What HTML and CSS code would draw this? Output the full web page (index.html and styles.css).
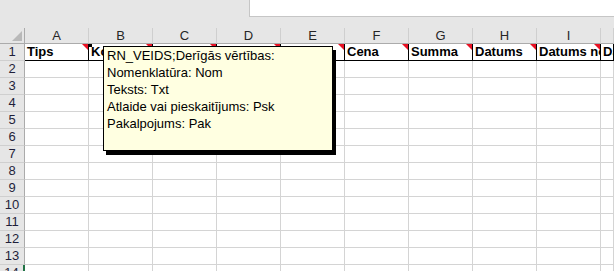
FILE: index.html
```html
<!DOCTYPE html>
<html lang="lv">
<head>
    <meta charset="utf-8"/>
    <title>Izklājlapa ar komentāru</title>
    <link rel="stylesheet" href="styles.css">
</head>
<body>
<div class="top-band">
    <div class="formula-box"></div>
</div>

<div class="sheet">
    <div class="row col-head">
        <div class="corner"><span class="select-all"></span></div>
        <div>A</div><div>B</div><div>C</div><div>D</div><div>E</div>
        <div>F</div><div>G</div><div>H</div><div>I</div><div></div>
    </div>

    <div class="row title-row">
        <div class="num">1</div>
        <div class="cell flag">Tips</div>
        <div class="cell flag">Ko</div>
        <div class="cell flag"></div>
        <div class="cell flag"></div>
        <div class="cell flag"></div>
        <div class="cell flag">Cena</div>
        <div class="cell flag">Summa</div>
        <div class="cell flag">Datums</div>
        <div class="cell flag">Datums no</div>
        <div class="cell">Datums līdz</div>
    </div>

    <div class="row"><div class="num">2</div><div></div><div></div><div></div><div></div><div></div><div></div><div></div><div></div><div></div><div></div></div>
    <div class="row"><div class="num">3</div><div></div><div></div><div></div><div></div><div></div><div></div><div></div><div></div><div></div><div></div></div>
    <div class="row"><div class="num">4</div><div></div><div></div><div></div><div></div><div></div><div></div><div></div><div></div><div></div><div></div></div>
    <div class="row"><div class="num">5</div><div></div><div></div><div></div><div></div><div></div><div></div><div></div><div></div><div></div><div></div></div>
    <div class="row"><div class="num">6</div><div></div><div></div><div></div><div></div><div></div><div></div><div></div><div></div><div></div><div></div></div>
    <div class="row"><div class="num">7</div><div></div><div></div><div></div><div></div><div></div><div></div><div></div><div></div><div></div><div></div></div>
    <div class="row"><div class="num">8</div><div></div><div></div><div></div><div></div><div></div><div></div><div></div><div></div><div></div><div></div></div>
    <div class="row"><div class="num">9</div><div></div><div></div><div></div><div></div><div></div><div></div><div></div><div></div><div></div><div></div></div>
    <div class="row"><div class="num">10</div><div></div><div></div><div></div><div></div><div></div><div></div><div></div><div></div><div></div><div></div></div>
    <div class="row"><div class="num">11</div><div></div><div></div><div></div><div></div><div></div><div></div><div></div><div></div><div></div><div></div></div>
    <div class="row"><div class="num">12</div><div></div><div></div><div></div><div></div><div></div><div></div><div></div><div></div><div></div><div></div></div>
    <div class="row"><div class="num">13</div><div></div><div></div><div></div><div></div><div></div><div></div><div></div><div></div><div></div><div></div></div>
    <div class="row"><div class="num active">14</div><div></div><div></div><div></div><div></div><div></div><div></div><div></div><div></div><div></div><div></div></div>

    <!-- comment attached to the header cell -->
    <span class="comment-anchor"></span>
    <div class="comment">
        <p>RN_VEIDS;Derīgās vērtības:</p>
        <p>Nomenklatūra: Nom</p>
        <p>Teksts: Txt</p>
        <p>Atlaide vai pieskaitījums: Psk</p>
        <p>Pakalpojums: Pak</p>
    </div>
</div>
</body>
</html>
```

FILE: styles.css
```css
html, body {
    margin: 0;
    height: 100%;
    overflow: hidden;
    background: #fff;
    font-family: "Liberation Sans", Arial, sans-serif;
}

.top-band {
    height: 28px;
    background: #e6e6e6;
    display: flex;
    justify-content: flex-end;
    align-items: flex-start;
}

.formula-box {
    width: 364px;
    height: 16px;
    background: #fff;
    border-left: 1px solid #c6c6c6;
    border-bottom: 1px solid #c6c6c6;
}

.sheet {
    position: relative;
}

.row {
    display: grid;
    grid-template-columns: 25px repeat(9, 64px) 1fr;
    height: 17px;
}

.row > div {
    box-sizing: border-box;
    border-right: 1px solid #d4d4d4;
    border-bottom: 1px solid #d4d4d4;
    overflow: hidden;
    white-space: nowrap;
}

/* column letters */
.col-head {
    height: 16px;
    background: #e6e6e6;
}

.col-head > div {
    border-right: 1px solid #cfcfcf;
    border-bottom: 1px solid #ababab;
    text-align: center;
    font-size: 13px;
    line-height: 15px;
    color: #262626;
}

.col-head > .corner {
    display: flex;
    justify-content: flex-end;
    align-items: flex-end;
    padding: 0 2px 2px 0;
    border-right-color: #ababab;
}

.select-all {
    width: 0;
    height: 0;
    border-left: 10px solid transparent;
    border-bottom: 10px solid #b9b9b9;
}

/* row numbers */
.row > .num {
    background: #e6e6e6;
    border-right: 1px solid #ababab;
    border-bottom: 1px solid #cfcfcf;
    text-align: center;
    font-size: 13px;
    line-height: 16px;
    color: #1f1f3a;
}

.row > .num.active {
    border-right: 2px solid #217346;
}

/* header cells of the table */
.title-row > .cell {
    position: relative;
    border-right-color: #000;
    border-bottom-color: #000;
    padding-left: 2px;
    font-size: 13px;
    font-weight: bold;
    line-height: 16px;
    color: #000;
}

.flag::after {
    content: "";
    position: absolute;
    top: 0;
    right: 0;
    border-left: 6px solid transparent;
    border-top: 6px solid #e81123;
}

.comment-anchor {
    position: absolute;
    left: 88px;
    top: 16px;
    width: 4px;
    height: 3px;
    background: #000;
}

.comment {
    position: absolute;
    left: 103px;
    top: 18px;
    width: 230px;
    height: 105px;
    box-sizing: border-box;
    padding: 0 3px;
    background: #ffffe1;
    border: 1px solid #000;
    box-shadow: 3px 4px 0 #000;
    font-size: 13px;
    line-height: 17px;
    color: #000;
}

.comment p {
    margin: 0;
}
```
